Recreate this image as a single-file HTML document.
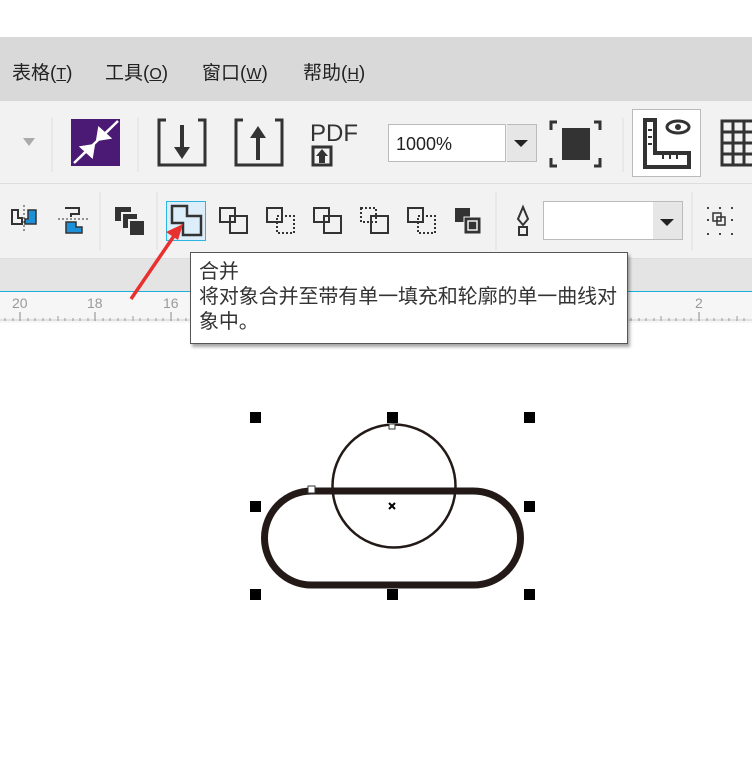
<!DOCTYPE html>
<html><head><meta charset="utf-8"><style>
body{margin:0;width:752px;height:763px;overflow:hidden;background:#fff;font-family:"Liberation Sans","Noto Sans CJK SC",sans-serif;position:relative}
.abs{position:absolute}
.menu{top:37px;left:0;width:752px;height:64px;background:#d9d9d9}
.menu span{position:absolute;top:21px;font-size:19px;color:#222}
.menu u{font-size:16px}
.tb1{top:101px;left:0;width:752px;height:82px;background:#f2f2f2;border-bottom:1px solid #ddd}
.tb2{top:184px;left:0;width:752px;height:74px;background:#f2f2f2;border-bottom:1px solid #ddd}
.band{top:259px;left:0;width:752px;height:32px;background:#e4e4e4}
.ruler{top:291px;left:0;width:752px;height:31px;background:#f6f6f6;border-top:1.5px solid #1ab0d8}
.tip{left:190px;top:252px;width:438px;height:92px;background:#fff;border:1px solid #555;box-shadow:2px 3px 3px rgba(0,0,0,.35);font-size:20px;color:#333;line-height:25px;padding:7px 0 0 8px;box-sizing:border-box;letter-spacing:-0.1px}
</style></head><body>
<div class="abs menu">
<span style="left:12px">表格(<u>T</u>)</span>
<span style="left:105px">工具(<u>O</u>)</span>
<span style="left:202px">窗口(<u>W</u>)</span>
<span style="left:303px">帮助(<u>H</u>)</span>
</div>
<div class="abs tb1"></div>
<div class="abs tb2"></div>
<div class="abs band"></div>
<div class="abs ruler"></div>
<div class="abs" style="left:388px;top:124px;width:118px;height:38px;background:#fff;border:1px solid #bbb;font-size:18px;line-height:38px;padding-left:7px;box-sizing:border-box;color:#222">1000%</div>
<div class="abs" style="left:507px;top:124px;width:30px;height:38px;background:#e6e6e6;border:1px solid #bbb;border-left:none;box-sizing:border-box"></div>
<div class="abs" style="left:632px;top:109px;width:69px;height:68px;background:#fff;border:1px solid #bbb;box-sizing:border-box"></div>
<div class="abs" style="left:543px;top:201px;width:111px;height:39px;background:#fff;border:1px solid #bbb;box-sizing:border-box"></div>
<div class="abs" style="left:653px;top:201px;width:30px;height:39px;background:#e6e6e6;border:1px solid #bbb;border-left:none;box-sizing:border-box"></div>
<svg class="abs" style="left:0;top:0" width="752" height="763">
<g stroke="#ddd"><line x1="52" y1="118" x2="52" y2="172"/><line x1="138" y1="118" x2="138" y2="172"/><line x1="623" y1="118" x2="623" y2="172"/><line x1="100" y1="192" x2="100" y2="250"/><line x1="157" y1="192" x2="157" y2="250"/><line x1="496" y1="192" x2="496" y2="250"/><line x1="692" y1="192" x2="692" y2="250"/></g>
<path d="M23 138l6 8 6-8z" fill="#aaa"/>
<rect x="71" y="119" width="49" height="47" fill="#4b1a74"/>
<path d="M74 163L118 121" stroke="#fff" stroke-width="2.5"/>
<path d="M97 140l13-2-11-10z M94 145l-13 2 11 10z M105 134l8-8M86 151l-8 8" fill="#fff" stroke="#fff" stroke-width="2"/>
<g fill="none" stroke="#333" stroke-width="3"><path d="M166 120h-7v45h46v-45h-7"/><path d="M243 120h-7v45h46v-45h-7"/></g>
<path d="M180 125v22h-6l8 12 8-12h-6v-22z M256 160v-22h-6l8-12 8 12h-6v22z" fill="#333"/>
<text x="310" y="141" font-size="24" fill="#333" font-family="Liberation Sans">PDF</text>
<rect x="313" y="147" width="18" height="18" fill="none" stroke="#333" stroke-width="3"/><path d="M322 149l-6 7h3v7h6v-7h3z" fill="#333"/>
<path d="M514 140l7 7 7-7z" fill="#222"/>
<path d="M557 122h-6v8 M594 122h6v8 M557 166h-6v-8 M594 166h6v-8" fill="none" stroke="#333" stroke-width="3"/>
<rect x="562" y="128" width="28" height="32" fill="#333"/>
<path d="M645 120v47h44v-14h-34v-33z" fill="none" stroke="#333" stroke-width="4"/>
<path d="M648 130h4M648 137h4M648 144h4M663 159v-4M670 159v-4M677 159v-4" stroke="#333" stroke-width="2"/>
<ellipse cx="678" cy="127" rx="11" ry="6" fill="none" stroke="#333" stroke-width="3"/><circle cx="678" cy="127" r="3" fill="#333"/>
<g fill="none" stroke="#333" stroke-width="3"><rect x="722" y="121" width="40" height="44"/><path d="M722 132h40M722 143h40M722 154h40M733 121v44M744 121v44"/></g>
<path d="M12 210v14h10v-6h-4v-8z" fill="none" stroke="#333" stroke-width="2"/><path d="M28 210h8v14h-11v-5h3z" fill="#1e90d8" stroke="#333" stroke-width="1.5"/>
<path d="M24 205v28" stroke="#333" stroke-dasharray="2 2"/>
<path d="M65 208h14v6h-8v3" fill="none" stroke="#333" stroke-width="2"/><path d="M58 219h30" stroke="#333" stroke-dasharray="2 2"/><path d="M66 222h10v5h6v6h-16z" fill="#1e90d8" stroke="#333" stroke-width="1.5"/>
<rect x="115" y="207" width="16" height="14" fill="#333"/><rect x="122" y="213" width="16" height="16" fill="#333" stroke="#f2f2f2" stroke-width="2"/><rect x="129" y="220" width="16" height="16" fill="#333" stroke="#f2f2f2" stroke-width="2"/>
<rect x="166.5" y="201.5" width="39" height="39" fill="#dceefa" stroke="#2cb5e0"/>
<path d="M172 206h15v10h14v19h-18v-12h-11z" fill="none" stroke="#333" stroke-width="2.5"/>
<g fill="none" stroke="#333" stroke-width="2"><rect x="220" y="208" width="15" height="14"/><rect x="230" y="216" width="17" height="17"/>
<rect x="267" y="208" width="15" height="14"/><rect x="277" y="216" width="17" height="17" stroke-dasharray="2 2"/>
<rect x="314" y="208" width="15" height="14"/><rect x="324" y="216" width="17" height="17"/>
<rect x="361" y="208" width="15" height="14" stroke-dasharray="2 2"/><rect x="371" y="216" width="17" height="17"/>
<rect x="408" y="208" width="15" height="14"/><rect x="418" y="216" width="17" height="17" stroke-dasharray="2 2"/></g>
<rect x="455" y="208" width="15" height="14" fill="#333"/><rect x="464" y="217" width="17" height="17" fill="#333" stroke="#f2f2f2" stroke-width="1"/><rect x="468" y="221" width="9" height="9" fill="#333" stroke="#f2f2f2" stroke-width="1.5"/>
<path d="M523 207l-5 12 5 6 5-6z M519 227h8v8h-8z" fill="none" stroke="#333" stroke-width="2"/>
<path d="M660 219l7 7 7-7z" fill="#222"/>
<g fill="#444"><rect x="707" y="207" width="2" height="2"/><rect x="719" y="207" width="2" height="2"/><rect x="731" y="207" width="2" height="2"/><rect x="707" y="219" width="2" height="2"/><rect x="731" y="219" width="2" height="2"/><rect x="707" y="233" width="2" height="2"/><rect x="719" y="233" width="2" height="2"/><rect x="731" y="233" width="2" height="2"/></g>
<rect x="713" y="213" width="8" height="8" fill="none" stroke="#333" stroke-width="1.5"/><rect x="717" y="217" width="8" height="8" fill="none" stroke="#333" stroke-width="1.5"/>
<g fill="#999" font-size="14" font-family="Liberation Sans"><text x="12" y="308">20</text><text x="87" y="308">18</text><text x="163" y="308">16</text><text x="695" y="308">2</text></g>
<path d="M0 320h752" stroke="#ccc"/>
<path d="M20 312v9M95 312v9M171 312v9M699 312v9M624 312v9" stroke="#888"/>
<path d="M5 318v3M13 318v3M28 318v3M35 318v3M43 318v3M50 318v3M58 316v5M65 318v3M73 318v3M80 318v3M88 318v3M103 318v3M110 318v3M118 318v3M125 318v3M133 316v5M140 318v3M148 318v3M156 318v3M163 318v3M178 318v3M186 318v3M631 318v3M639 318v3M646 318v3M654 318v3M661 316v5M669 318v3M676 318v3M684 318v3M691 318v3M707 318v3M714 318v3M722 318v3M729 318v3M737 316v5M744 318v3" stroke="#999"/>
<path d="M131 299L176 233" stroke="#e8312f" stroke-width="3.5"/><path d="M183 224l-17 8 12 8z" fill="#e8312f"/>
<circle cx="394" cy="486" r="61.5" fill="none" stroke="#231a18" stroke-width="2.5"/>
<rect x="264.5" y="491" width="256" height="94" rx="47" fill="none" stroke="#231a18" stroke-width="7"/>
<g fill="#000"><rect x="250" y="412" width="11" height="11"/><rect x="387" y="412" width="11" height="11"/><rect x="524" y="412" width="11" height="11"/><rect x="250" y="501" width="11" height="11"/><rect x="524" y="501" width="11" height="11"/><rect x="250" y="589" width="11" height="11"/><rect x="387" y="589" width="11" height="11"/><rect x="524" y="589" width="11" height="11"/></g>
<rect x="389" y="424" width="6" height="5" fill="#fff" stroke="#333"/><rect x="308" y="486" width="7" height="7" fill="#fff" stroke="#333"/>
<path d="M389 503l6 6M395 503l-6 6" stroke="#000" stroke-width="2"/>
</svg>
<div class="abs tip"><div>合并</div><div>将对象合并至带有单一填充和轮廓的单一曲线对<br>象中。</div></div>
</body></html>
